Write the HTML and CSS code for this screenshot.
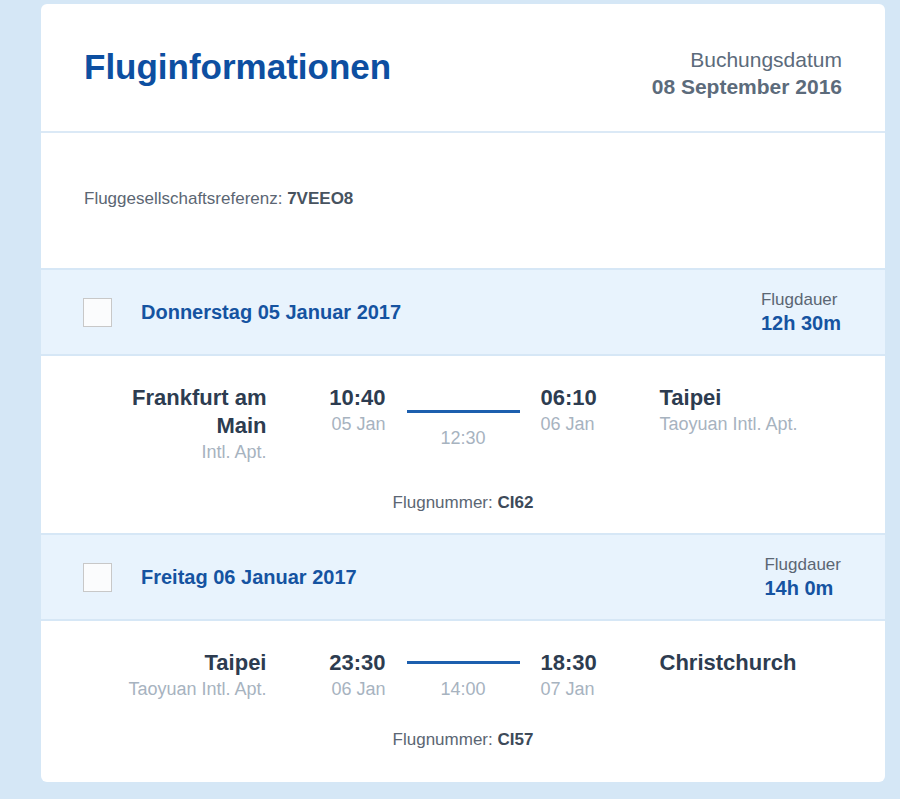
FILE: index.html
```html
<!DOCTYPE html>
<html lang="de">
  <head>
    <meta charset="UTF-8">
    <title>Fluginformationen</title>
    <link rel="stylesheet" href="styles.css">
  </head>
  <body>
    <div class="karte">
      <div class="kopf">
        <h1 class="titel">Fluginformationen</h1>
        <div class="buchung">
          <div class="buchung-label">Buchungsdatum</div>
          <div class="buchung-datum">08 September 2016</div>
        </div>
      </div>
      <div class="referenz">
        Fluggesellschaftsreferenz: <b>7VEEO8</b>
      </div>

      <div class="tag">
        <span class="auswahl"></span>
        <div class="tag-datum">Donnerstag 05 Januar 2017</div>
        <div class="dauer">
          <div class="dauer-label">Flugdauer</div>
          <div class="dauer-wert">12h 30m</div>
        </div>
      </div>
      <div class="segment">
        <div class="strecke">
          <div class="ort ort-start">
            <div class="ort-name">Frankfurt am Main</div>
            <div class="ort-sub">Intl. Apt.</div>
          </div>
          <div class="zeit zeit-ab">
            <div class="zeit-uhr">10:40</div>
            <div class="zeit-tag">05 Jan</div>
          </div>
          <div class="mitte">
            <div class="linie"></div>
            <div class="mitte-dauer">12:30</div>
          </div>
          <div class="zeit">
            <div class="zeit-uhr">06:10</div>
            <div class="zeit-tag">06 Jan</div>
          </div>
          <div class="ort">
            <div class="ort-name">Taipei</div>
            <div class="ort-sub">Taoyuan Intl. Apt.</div>
          </div>
        </div>
        <div class="flugnummer">Flugnummer: <b>CI62</b></div>
      </div>

      <div class="tag">
        <span class="auswahl"></span>
        <div class="tag-datum">Freitag 06 Januar 2017</div>
        <div class="dauer">
          <div class="dauer-label">Flugdauer</div>
          <div class="dauer-wert">14h 0m</div>
        </div>
      </div>
      <div class="segment">
        <div class="strecke">
          <div class="ort ort-start">
            <div class="ort-name">Taipei</div>
            <div class="ort-sub">Taoyuan Intl. Apt.</div>
          </div>
          <div class="zeit zeit-ab">
            <div class="zeit-uhr">23:30</div>
            <div class="zeit-tag">06 Jan</div>
          </div>
          <div class="mitte">
            <div class="linie"></div>
            <div class="mitte-dauer">14:00</div>
          </div>
          <div class="zeit">
            <div class="zeit-uhr">18:30</div>
            <div class="zeit-tag">07 Jan</div>
          </div>
          <div class="ort">
            <div class="ort-name">Christchurch</div>
          </div>
        </div>
        <div class="flugnummer">Flugnummer: <b>CI57</b></div>
      </div>
    </div>
  </body>
</html>
```

FILE: styles.css
```css
html {
  background: #d5e7f6;
}
body {
  margin: 0;
  padding: 4px 15px 17px 41px;
  font-family: "Liberation Sans", Arial, sans-serif;
  color: #2d3c50;
}
.karte {
  background: #fff;
  border-radius: 6px;
  overflow: hidden;
}
.kopf {
  display: flex;
  justify-content: space-between;
  align-items: flex-start;
  padding: 43px 43px 30px;
  border-bottom: 2px solid #dbe9f6;
}
.titel {
  margin: 0;
  font-size: 35px;
  line-height: 40px;
  color: #0d4fa1;
}
.buchung {
  text-align: right;
  color: #5c6b7b;
}
.buchung-label {
  font-size: 21px;
  line-height: 26px;
}
.buchung-datum {
  font-size: 21px;
  line-height: 28px;
  font-weight: bold;
}
.referenz {
  padding: 55px 43px 58px;
  font-size: 17px;
  line-height: 22px;
  color: #5b6673;
}
.referenz b {
  color: #47535f;
}
.tag {
  display: flex;
  align-items: center;
  height: 84px;
  padding: 0 44px 0 42px;
  background: #e8f3fd;
  border-top: 2px solid #d6e7f6;
  border-bottom: 2px solid #d6e7f6;
}
.auswahl {
  width: 27px;
  height: 27px;
  border: 1px solid #c8c8c8;
  background: #fbfcfd;
  margin-right: 29px;
}
.tag-datum {
  flex: 1;
  font-size: 20px;
  font-weight: bold;
  color: #1553a1;
}
.dauer-label {
  font-size: 17px;
  line-height: 22px;
  color: #5b6673;
}
.dauer-wert {
  font-size: 20px;
  line-height: 24px;
  font-weight: bold;
  color: #1553a1;
}
.segment {
  padding: 28px 43px 20px;
}
.segment:last-child {
  padding-bottom: 32px;
}
.strecke {
  display: grid;
  grid-template-columns: 1fr 98px 113px 98px 1fr;
  column-gap: 21px;
}
.ort-start,
.zeit-ab {
  text-align: right;
}
.ort-name,
.zeit-uhr {
  font-size: 22px;
  line-height: 28px;
  font-weight: bold;
}
.ort-sub,
.zeit-tag,
.mitte-dauer {
  font-size: 18px;
  line-height: 24px;
  color: #a7b3bf;
}
.ort-start .ort-name {
  padding-left: 30px;
}
.mitte {
  align-self: center;
  text-align: center;
  padding-top: 11px;
}
.linie {
  height: 3px;
  background: #1d5fae;
  margin-bottom: 13px;
}
.flugnummer {
  margin-top: 29px;
  text-align: center;
  font-size: 17px;
  line-height: 20px;
  color: #5b6673;
}
.flugnummer b {
  color: #3d4a59;
}
```
